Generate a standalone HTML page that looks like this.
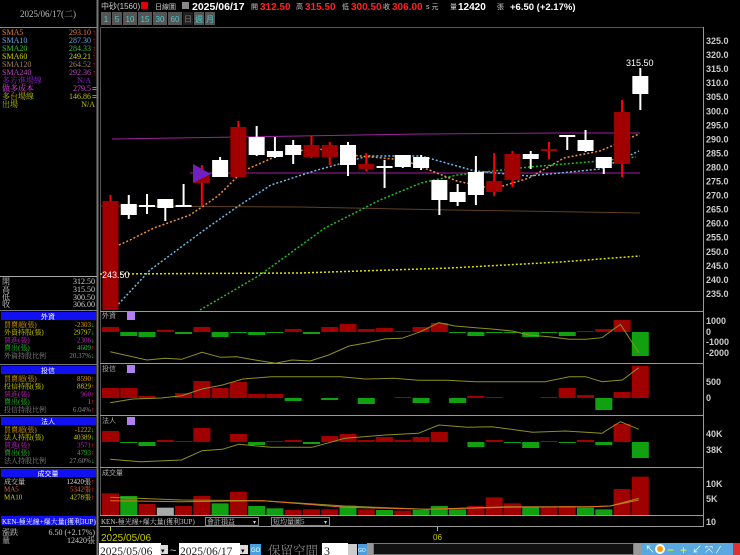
<!DOCTYPE html>
<html><head><meta charset="utf-8">
<style>
html,body{margin:0;padding:0;background:#000;width:740px;height:555px;overflow:hidden}
svg{display:block;font-family:"Liberation Sans","Noto Sans CJK TC",sans-serif}
.s{font-family:"Liberation Serif","Noto Serif CJK SC",serif}
</style></head><body>
<svg id="c" width="740" height="555" viewBox="0 0 740 555" xmlns="http://www.w3.org/2000/svg" font-size="9">
<rect width="740" height="555" fill="#000"/>
<text x="48" y="17" fill="#bbb" text-anchor="middle" class="s" font-size="9">2025/06/17(二)</text>
<line x1="0" y1="27.5" x2="98" y2="27.5" stroke="#888"/>
<line x1="97.5" y1="0" x2="97.5" y2="555" stroke="#777" stroke-width="2"/>
<g class="s" font-size="8">
<text x="2" y="35" fill="#e08030">SMA5</text><text x="91" y="35" fill="#e08030" text-anchor="end">293.10</text>
<text x="2" y="43" fill="#60a8e0">SMA10</text><text x="91" y="43" fill="#60a8e0" text-anchor="end">287.30</text>
<text x="2" y="51" fill="#30c030">SMA20</text><text x="91" y="51" fill="#30c030" text-anchor="end">284.33</text>
<text x="2" y="59" fill="#d0d000">SMA60</text><text x="91" y="59" fill="#d0d000" text-anchor="end">249.21</text>
<text x="2" y="67" fill="#a08060">SMA120</text><text x="91" y="67" fill="#a08060" text-anchor="end">264.52</text>
<text x="2" y="75" fill="#c040c0">SMA240</text><text x="91" y="75" fill="#c040c0" text-anchor="end">292.36</text>
<text x="2" y="83" fill="#9020d0">多方進場線</text><text x="91" y="83" fill="#9020d0" text-anchor="end">N/A</text>
<text x="2" y="91" fill="#e040e0">做多成本</text><text x="91" y="91" fill="#e040e0" text-anchor="end">279.5</text>
<text x="2" y="99" fill="#c0c000">多台場線</text><text x="91" y="99" fill="#c0c000" text-anchor="end">146.86</text>
<text x="2" y="107" fill="#c0c000">出場</text><text x="95" y="107" fill="#c0c000" text-anchor="end">N/A</text>
</g>
<g fill="#f00" font-size="8"><text x="92" y="35">↑</text><text x="92" y="43">↑</text><text x="92" y="51">↑</text><text x="92" y="59">↑</text><text x="92" y="67">↑</text><text x="92" y="75">↑</text></g>
<text x="92" y="91" fill="#ccc" font-size="8">=</text><text x="92" y="99" fill="#ccc" font-size="8">=</text>
<line x1="0" y1="276.5" x2="97" y2="276.5" stroke="#aaa"/>
<g class="s" fill="#ccc" font-size="8">
<text x="2" y="284">開</text><text x="95" y="284" text-anchor="end">312.50</text>
<text x="2" y="292">高</text><text x="95" y="292" text-anchor="end">315.50</text>
<text x="2" y="300">低</text><text x="95" y="300" text-anchor="end">300.50</text>
<text x="2" y="307">收</text><text x="95" y="307" text-anchor="end">306.00</text>
</g>
<g id="lp"></g>
<rect x="1" y="516" width="95" height="9" fill="#1010f0"/>
<text x="2" y="524" fill="#fff" font-size="7" class="s">KEN-極光線+爆大量(獲利3UP)</text>
<text x="2" y="535" fill="#ccc" class="s" font-size="8">漲跌</text><text x="95" y="535" fill="#ccc" text-anchor="end" class="s" font-size="8">6.50 (+2.17%)</text>
<text x="2" y="543" fill="#ccc" class="s" font-size="8">量</text><text x="95" y="543" fill="#ccc" text-anchor="end" class="s" font-size="8">12420張</text>

<!-- header -->
<text x="101" y="9" fill="#ccc" font-size="8">中砂(1560)</text>
<rect x="141" y="2" width="7" height="7" fill="#d00"/>
<text x="155" y="9" fill="#ccc" font-size="7">日線圖</text>
<rect x="182" y="2" width="7" height="7" fill="#888"/>
<text x="192" y="10" fill="#fff" font-size="10.5" font-weight="bold">2025/06/17</text>
<text x="251" y="9" fill="#ccc" font-size="7">開</text>
<text x="260" y="10" fill="#f22" font-size="10" font-weight="bold">312.50</text>
<text x="296" y="9" fill="#ccc" font-size="7">高</text><text x="305" y="10" fill="#f22" font-size="10" font-weight="bold">315.50</text>
<text x="342" y="9" fill="#ccc" font-size="7">低</text><text x="351" y="10" fill="#f22" font-size="10" font-weight="bold">300.50</text>
<text x="383" y="9" fill="#ccc" font-size="7">收</text><text x="392" y="10" fill="#f22" font-size="10" font-weight="bold">306.00</text>
<text x="426" y="9" fill="#ccc" font-size="7">s 元</text>
<text x="450" y="9" fill="#ccc" font-size="7">量</text><text x="458" y="10" fill="#fff" font-size="10" font-weight="bold">12420</text>
<text x="497" y="9" fill="#ccc" font-size="7">張</text>
<text x="510" y="10" fill="#fff" font-size="9.5" font-weight="bold">+6.50 (+2.17%)</text>
<g id="btns"></g>

<line x1="100" y1="27.5" x2="704" y2="27.5" stroke="#804050"/>
<line x1="100.5" y1="27" x2="100.5" y2="515" stroke="#555"/>
<line x1="703.5" y1="27" x2="703.5" y2="527" stroke="#999"/>
<g stroke="#999"><line x1="100" y1="311.5" x2="704" y2="311.5"/><line x1="100" y1="363.5" x2="704" y2="363.5"/><line x1="100" y1="415.5" x2="704" y2="415.5"/><line x1="100" y1="467.5" x2="704" y2="467.5"/><line x1="100" y1="515.5" x2="704" y2="515.5"/><line x1="100" y1="526.5" x2="704" y2="526.5"/></g>
<g id="g"></g>
<text x="101" y="524" fill="#ccc" font-size="7" class="s">KEN-極光線+爆大量(獲利3UP)</text>
<rect x="205.5" y="517.5" width="53" height="8" fill="none" stroke="#888"/><text x="207" y="524" fill="#ccc" font-size="7" class="s">會計損益</text><text x="253" y="524" fill="#ccc" font-size="6">▾</text>
<rect x="271.5" y="517.5" width="58" height="8" fill="none" stroke="#888"/><text x="273" y="524" fill="#ccc" font-size="7" class="s">短均量圖5</text><text x="324" y="524" fill="#ccc" font-size="6">▾</text>
<line x1="110.5" y1="527" x2="110.5" y2="531" stroke="#c8c800"/><line x1="437.5" y1="527" x2="437.5" y2="531" stroke="#c8c800"/>
<text x="101" y="541" fill="#c8c800" font-size="10">2025/05/06</text>
<text x="433" y="540" fill="#c8c800" font-size="8">06</text>
<rect x="99" y="543" width="62" height="12" fill="#fff"/><text x="100" y="555" fill="#222" font-size="11.5" class="s">2025/05/06</text>
<rect x="160" y="545" width="8" height="9" fill="#ddd"/><text x="161" y="553" fill="#000" font-size="7">▾</text>
<text x="170" y="554" fill="#ccc" font-size="11">~</text>
<rect x="179" y="543" width="61" height="12" fill="#fff"/><text x="180" y="555" fill="#222" font-size="11.5" class="s">2025/06/17</text>
<rect x="240" y="545" width="8" height="9" fill="#ddd"/><text x="241" y="553" fill="#000" font-size="7">▾</text>
<rect x="250" y="544" width="11" height="11" fill="#4a9ee0"/><text x="251" y="552" fill="#fff" font-size="6">GO</text>
<text x="268" y="555" fill="#888" font-size="12.5" class="s">保留空間</text>
<rect x="322" y="543" width="26" height="12" fill="#fff"/><text x="324" y="555" fill="#222" font-size="12" class="s">3</text>
<rect x="348" y="544" width="9" height="11" fill="#ccc"/>
<rect x="358" y="544" width="9" height="11" fill="#4a9ee0"/><text x="358" y="552" fill="#fff" font-size="5">GO</text>
<rect x="367" y="543" width="6" height="12" fill="#999"/>
<rect x="373.5" y="543.5" width="260" height="11" fill="#111" stroke="#777"/>
<rect x="634" y="543" width="8" height="12" fill="#999"/>
<rect x="642" y="543" width="94" height="12" fill="#59a8e0"/>
<g fill="#fff" font-size="10"><text x="645" y="553">↖</text><circle cx="660" cy="549" r="5" fill="#fff"/><circle cx="660" cy="549" r="3" fill="#f90"/><text x="667" y="554" fill="#ff0" font-size="12">−</text><text x="680" y="554" fill="#ff0" font-size="12">+</text><text x="692" y="553">↙</text><text x="705" y="553">⤧</text><text x="718" y="553">⁄</text></g>
<rect x="733" y="543" width="7" height="12" fill="#e03030"/>
</svg>
<script>
var g=document.getElementById('g'),h='';
function X(i){return 110.5+18.27*i}
for(var p=325;p>=235;p-=5){var y=41+(325-p)*2.81;h+='<text x="706" y="'+(y+3)+'" fill="#ccc" font-size="9" font-weight="bold">'+p.toFixed(1)+'</text>';}
[['1000',324],['0',335],['-1000',345],['-2000',356],['500',385],['0',401],['40K',437],['38K',453],['10K',487],['5K',502],['10',525]].forEach(function(a){h+='<text x="706" y="'+a[1]+'" fill="#ccc" font-size="9" font-weight="bold">'+a[0]+'</text>';});
function pl(pts,col,dash,w){h+='<polyline fill="none" stroke="'+col+'" stroke-width="'+(w||1.5)+'" '+(dash?'stroke-dasharray="2,2"':'')+' points="'+pts+'"/>';}
pl('112,139 300,136 420,134 560,133 640,133','#a020a0',0,1);
pl('190,173 640,173','#a020a0',0,1);
pl('100,206 300,207 450,210 640,213','#604020',0,1);
pl('100,274 300,273 450,268 560,262 640,256','#e0e000',1);
pl('200,310 260,275 325,228 380,200 421,183 457,175 529,167 600,161 636,157','#20c020',1);
pl('113,310 150,270 207,228 240,205 271,185 314,171 368,156 421,156 475,171 529,176 600,169 639,151','#70b8e8',1);
pl('108,250 130,240 154,228 190,215 218,196 243,171 279,155 314,148 350,155 404,160 457,181 493,189 529,178 564,158 600,151 639,134','#f09040',1);
var C=[[201,310,195,310,'r'],[204,215,195,219,'w'],[205,207,194,214,'w'],[199,208,199,221,'w'],[205,207,184,207,'w'],[174,183,165,206,'r'],[160,177,157,177,'w'],[127,177,121,177,'r'],[137,155,126,156,'w'],[151,157,137,158,'w'],[145,155,140,164,'w'],[145,157,136,158,'r'],[145,157,142,165,'r'],[145,165,142,176,'w'],[164,169,153,171,'r'],[166,168,160,188,'w'],[155,167,155,168,'w'],[157,168,155,170,'w'],[180,200,180,215,'w'],[192,202,184,206,'w'],[172,195,156,205,'w'],[181,192,153,196,'r'],[154,180,151,187,'r'],[154,159,151,169,'w'],[149,151,142,159,'r'],[135,137,135,150,'w'],[140,151,130,152,'w'],[157,168,157,174,'w'],[112,164,100,177,'r'],[76,94,68,110,'w']];
C.forEach(function(c,i){var x=X(i),r=c[4]=='r';h+='<line x1="'+x+'" y1="'+c[2]+'" x2="'+x+'" y2="'+c[3]+'" stroke="'+(r?'#f00':'#fff')+'" stroke-width="2"/>';h+='<rect x="'+(x-8)+'" y="'+c[0]+'" width="16" height="'+Math.max(2,c[1]-c[0])+'" fill="'+(r?'#a00000':'#fff')+'"/>';});
h+='<polygon points="193,164 211,174 193,183" fill="#7020c0"/>';
h+='<text x="102" y="278" fill="#fff" font-size="9">243.50</text><text x="626" y="66" fill="#fff" font-size="9">315.50</text>';
function bars(z,arr){arr.forEach(function(v,i){var x=102+18.27*i;if(v==0)return;h+='<rect x="'+x+'" y="'+(v>0?z-v:z)+'" width="17" height="'+Math.abs(v)+'" fill="'+(v>0?'#a00000':'#10a010')+'"/>';});}
bars(332,[5,-4,-5,2,-2,5,-5,-1,-3,-1,3,-2,5,8,3,4,1,5,9,-1,-4,-1,-1,-5,-1,-4,1,3,12,-24]);
bars(398,[10,10,2,0,5,17,10,16,4,4,-3,0,-2,0,-6,0,1,-5,0,-5,2,1,0,0,1,10,3,-12,6,32]);
bars(442,[11,-1,-4,2,1,14,0,8,-3,1,2,-2,6,8,2,5,2,5,10,0,-5,2,-1,-6,1,-1,2,-3,18,-16]);
var V=[250,258,282,293,288,258,280,245,288,295,300,298,298,287,298,300,302,300,288,298,288,262,280,290,292,288,293,298,237,200],VC='rgrarrgrggrrrgrgrgggrrrgrrggrr';
V.forEach(function(v,i){var y=410+v/3,x=102+18.27*i,c=VC[i];h+='<rect x="'+x+'" y="'+y+'" width="17" height="'+(515-y)+'" fill="'+(c=='r'?'#a00000':c=='g'?'#10a010':'#aaa')+'"/>';});
function zl(pts,oy,col){pl(pts.map(function(p){return (100+p[0]/2.45).toFixed(1)+','+(oy+p[1]/3).toFixed(1)}).join(' '),col,0,1);}
zl([[25,140],[115,165],[160,160],[200,163],[250,142],[295,157],[335,155],[380,165],[430,175],[470,165],[515,168],[560,150],[610,123],[655,113],[700,101],[740,100],[785,80],[830,53],[870,63],[920,68],[960,72],[1010,78],[1050,90],[1100,95],[1150,103],[1190,103],[1230,98],[1275,58],[1320,143]],305,'#909020');
zl([[25,293],[80,282],[150,279],[200,272],[250,252],[300,240],[350,222],[420,215],[530,215],[590,215],[650,222],[720,220],[780,226],[850,226],[920,230],[1000,230],[1090,230],[1150,215],[1190,215],[1230,230],[1280,225],[1320,188]],305,'#909020');
zl([[25,148],[100,155],[200,150],[250,122],[300,118],[340,103],[420,112],[520,112],[600,85],[700,75],[780,70],[830,45],[900,52],[960,50],[1060,67],[1140,63],[1230,70],[1275,35],[1320,58]],410,'#909020');
zl([[25,262],[200,270],[400,272],[600,288],[800,298],[1000,290],[1200,290],[1250,288],[1320,265]],410,'#909020');
zl([[25,272],[200,275],[400,272],[600,292],[800,298],[1000,292],[1200,290],[1250,288],[1320,270]],410,'#e07020');
[['外資',318],['投信',371],['法人',423],['成交量',475]].forEach(function(a,k){h+='<text x="102" y="'+a[1]+'" fill="#aaa" font-size="7">'+a[0]+'</text>';if(k<3)h+='<rect x="127" y="'+(a[1]-6)+'" width="8" height="8" fill="#b080f0"/>';});
g.innerHTML=h;
var lp='',B=[['外資',312,[['買賣超(張)','-2303','#e0a000','g'],['外資持股(張)','29797','#d0d000','g'],['買進(張)','2306','#c020c0','g'],['賣出(張)','4609','#20c020','r'],['外資持股比例','20.37%','#888','g']]],
['投信',366,[['買賣超(張)','8590','#e0a000','r'],['投信持股(張)','8829','#d0d000','r'],['買進(張)','960','#c020c0','r'],['賣出(張)','1','#20c020','r'],['投信持股比例','6.04%','#888','r']]],
['法人',417,[['買賣超(張)','-1222','#e0a000','g'],['法人持股(張)','40389','#d0d000','g'],['買進(張)','3571','#c020c0','r'],['賣出(張)','4793','#20c020','r'],['法人持股比例','27.60%','#888','g']]],
['成交量',469,[['成交量','12420張','#ddd','r'],['MA5','5342張','#e06040','r'],['MA10','4278張','#d0d000','r']]]];
B.forEach(function(b){lp+='<rect x="1" y="'+b[1]+'" width="95" height="8" fill="#1010f0"/><text x="48" y="'+(b[1]+7)+'" fill="#fff" font-size="7" text-anchor="middle">'+b[0]+'</text>';
b[2].forEach(function(r,k){var y=b[1]+15+k*7.7;lp+='<text class="s" x="4" y="'+y+'" fill="'+r[2]+'" font-size="7">'+r[0]+'</text><text class="s" x="91" y="'+y+'" fill="'+r[2]+'" font-size="7" text-anchor="end">'+r[1]+'</text><text x="91" y="'+y+'" fill="'+(r[3]=='g'?'#2c2':'#f22')+'" font-size="7">'+(r[3]=='g'?'↓':'↑')+'</text>';});
lp+='<line x1="0" y1="'+(b[1]-1.5)+'" x2="97" y2="'+(b[1]-1.5)+'" stroke="#777"/>';});
document.getElementById('lp').innerHTML=lp;
var bt='',L=['1','5','10','15','30','60','日','週','月'],bx=101;
L.forEach(function(t,i){var w=t.length>1?14:10;var d=(i==6);bt+='<rect x="'+bx+'" y="12" width="'+w+'" height="13" fill="'+(d?'#202020':'#555')+'"/><text x="'+(bx+w/2)+'" y="22" fill="'+(d?'#777':'#4cc')+'" font-size="8" text-anchor="middle">'+t+'</text>';bx+=w+1;});
document.getElementById('btns').innerHTML=bt;
</script>
</body></html>
